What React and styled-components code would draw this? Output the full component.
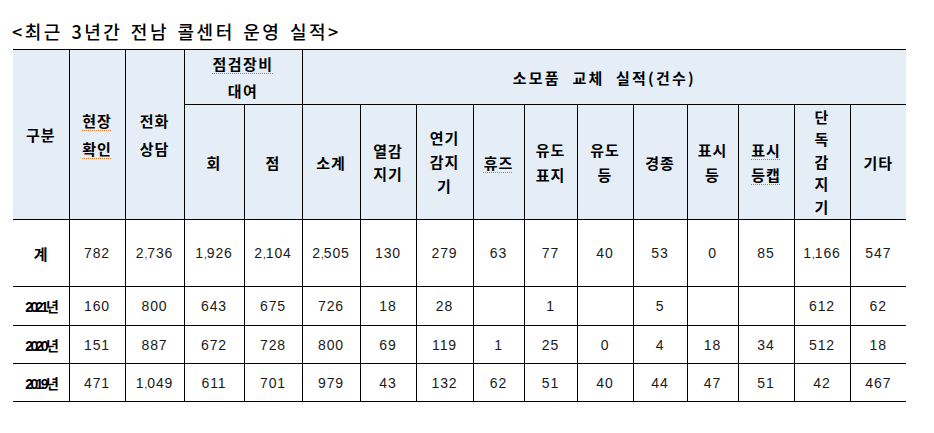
import React from 'react';
import styled, { createGlobalStyle } from 'styled-components';

const GlobalStyle = createGlobalStyle`
  html, body {
    margin: 0;
    padding: 0;
    background: #fff;
  }
  body {
    font-family: "Noto Sans CJK KR", "Noto Sans", sans-serif;
    color: #000;
  }
`;

const Page = styled.div`
  padding: 18px 0 0 13px;
  width: 921px;
  box-sizing: border-box;
`;

const Title = styled.h1`
  margin: 0 0 5px -1px;
  font-size: 18px;
  line-height: 26px;
  font-weight: 500;
  letter-spacing: 2.5px;
  word-spacing: 2px;
`;

const Table = styled.table`
  border-collapse: collapse;
  table-layout: fixed;
  width: 893px;
  border-top: 1px solid #000;
  border-bottom: 1px solid #000;
`;

const HeadCell = styled.th`
  background: #e5edf7;
  border: 1px solid #000;
  padding: 0;
  font-size: 15px;
  font-weight: 700;
  line-height: ${p => p.$lh || 25}px;
  height: ${p => p.$h ? `${p.$h}px` : 'auto'};
  text-align: center;
  vertical-align: middle;
  letter-spacing: ${p => p.$ls ?? 1}px;
  word-spacing: ${p => p.$ws ?? 0}px;
  &:first-child { border-left: none; }
  &:last-child { border-right: none; }
`;

const Spell = styled.span`
  text-decoration-line: underline;
  text-decoration-style: dotted;
  text-decoration-color: #d9702a;
  text-decoration-thickness: 1px;
  text-underline-offset: 3px;
`;

const Row = styled.tr`
  height: ${p => p.$h}px;
`;

const Label = styled.td`
  border: 1px solid #000;
  border-left: none;
  padding: 0;
  text-align: center;
  font-family: "Liberation Sans", "Noto Sans CJK KR", sans-serif;
  font-weight: 700;
  font-size: ${p => p.$tight ? 14 : 15}px;
  letter-spacing: ${p => p.$tight ? '-2.6px' : '0'};
`;

const Num = styled.td`
  border: 1px solid #000;
  padding: 0;
  text-align: center;
  font-family: "Liberation Sans", sans-serif;
  font-size: 14px;
  letter-spacing: 0.9px;
  color: #1a1a1a;
  &:last-child { border-right: none; }
`;

const Comma = styled.span`
  font-size: 10px;
  letter-spacing: 0;
`;

const widths = [56, 56, 59, 60, 58, 58, 56, 57, 51, 53, 56, 54, 51, 56, 56, 56];

const rows = [
  { label: '계', h: 67, tight: false, v: ['782', '2,736', '1,926', '2,104', '2,505', '130', '279', '63', '77', '40', '53', '0', '85', '1,166', '547'] },
  { label: '2021년', h: 39, tight: true, v: ['160', '800', '643', '675', '726', '18', '28', '', '1', '', '5', '', '', '612', '62'] },
  { label: '2020년', h: 38, tight: true, v: ['151', '887', '672', '728', '800', '69', '119', '1', '25', '0', '4', '18', '34', '512', '18'] },
  { label: '2019년', h: 38, tight: true, v: ['471', '1,049', '611', '701', '979', '43', '132', '62', '51', '40', '44', '47', '51', '42', '467'] },
];

const lines = (...parts) => parts.map((p, i) => (
  <React.Fragment key={i}>{i > 0 && <br />}{p}</React.Fragment>
));

// 천 단위 쉼표를 좁게
const fmt = (s) => {
  const [a, b] = s.split(',');
  if (b === undefined) return s;
  return <>{a}<Comma>,</Comma>{b}</>;
};

export default function App() {
  return (
    <Page>
      <GlobalStyle />
      <Title>&lt;최근 3년간 전남 콜센터 운영 실적&gt;</Title>
      <Table>
        <colgroup>
          {widths.map((w, i) => <col key={i} style={{ width: w }} />)}
        </colgroup>
        <thead>
          <tr>
            <HeadCell rowSpan={2}>구분</HeadCell>
            <HeadCell rowSpan={2} $lh={28}><Spell>현장</Spell><br /><Spell>확인</Spell></HeadCell>
            <HeadCell rowSpan={2} $lh={28}>전화<br />상담</HeadCell>
            <HeadCell colSpan={2} $h={54} $lh={27} $ls={1.5}><Spell>점검장비</Spell><br />대여</HeadCell>
            <HeadCell colSpan={11} $ls={2.2} $ws={6}>소모품 교체 실적(건수)</HeadCell>
          </tr>
          <tr>
            <HeadCell $h={114}>회</HeadCell>
            <HeadCell>점</HeadCell>
            <HeadCell>소계</HeadCell>
            <HeadCell $lh={23}>{lines('열감', '지기')}</HeadCell>
            <HeadCell $lh={24}>{lines('연기', '감지', '기')}</HeadCell>
            <HeadCell><Spell>휴즈</Spell></HeadCell>
            <HeadCell>{lines('유도', '표지')}</HeadCell>
            <HeadCell>{lines('유도', '등')}</HeadCell>
            <HeadCell>경종</HeadCell>
            <HeadCell>{lines('표시', '등')}</HeadCell>
            <HeadCell><Spell>표시</Spell><br /><Spell>등캡</Spell></HeadCell>
            <HeadCell $lh={22.4}>{lines('단', '독', '감', '지', '기')}</HeadCell>
            <HeadCell>기타</HeadCell>
          </tr>
        </thead>
        <tbody>
          {rows.map(r => (
            <Row key={r.label} $h={r.h}>
              <Label $tight={r.tight}>{r.label}</Label>
              {r.v.map((x, i) => <Num key={i}>{fmt(x)}</Num>)}
            </Row>
          ))}
        </tbody>
      </Table>
    </Page>
  );
}
